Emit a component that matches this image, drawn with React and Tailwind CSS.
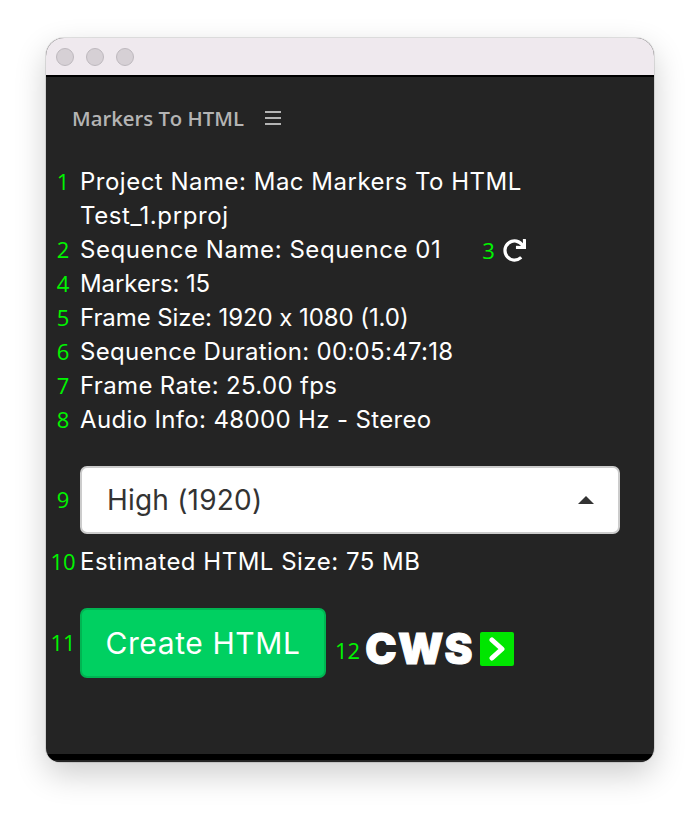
import React from "react";
import { FaRedo } from "react-icons/fa";

function Num({ children, className = "" }) {
  return (
    <div className={`w-[34px] shrink-0 text-center text-[22px] leading-[34px] text-[#00f500] font-['Open_Sans',sans-serif] ${className}`}>{children}</div>
  );
}

function Row({ n, children, track }) {
  return (
    <div className="flex">
      <Num className="-mt-px">{n}</Num>
      <div className={`flex-1 text-[24px] leading-[34px] text-white font-['Inter',sans-serif] ${track}`}>{children}</div>
    </div>
  );
}

export default function App() {
  return (
    <div className="h-[816px] w-[700px] bg-white pt-[38px] pl-[46px] overflow-hidden">
      <div className="w-[608px] h-[724px] rounded-t-[18px] rounded-b-[14px] overflow-hidden shadow-[0_0_0_1px_rgba(0,0,0,0.1),0_12px_32px_rgba(0,0,0,0.2)] flex flex-col bg-[#242424]">
        <div className="h-[39px] shrink-0 bg-[#efe9ee] border-b-2 border-black flex items-center gap-3 pl-[10px]">
          <div className="w-[18px] h-[18px] rounded-full bg-[#d6d0d5] border border-[#bdb8bd]" />
          <div className="w-[18px] h-[18px] rounded-full bg-[#d6d0d5] border border-[#bdb8bd]" />
          <div className="w-[18px] h-[18px] rounded-full bg-[#d6d0d5] border border-[#bdb8bd]" />
        </div>
        <div className="flex-1 flex flex-col">
          <div className="flex items-center h-[28px] mt-[27px] pl-[26px]">
            <span className="text-[20.3px] font-semibold text-[#b4b4b4] font-['Open_Sans',sans-serif] leading-[28px]">Markers To HTML</span>
            <div className="ml-[21px] w-[16px] flex flex-col gap-[4px]">
              <div className="h-[2px] bg-[#b4b4b4]" />
              <div className="h-[2px] bg-[#b4b4b4]" />
              <div className="h-[2px] bg-[#b4b4b4]" />
            </div>
          </div>
          <div className="mt-[33px]">
            <Row n="1" track="tracking-[0.5px]">Project Name: Mac Markers To HTML<br /><span className="tracking-[0.6px]">Test_1.prproj</span></Row>
            <Row n="2" track="tracking-[0.55px]">
              <div className="flex items-center">
                <span>Sequence Name: Sequence 01</span>
                <span className="ml-[41px] -mt-px text-[22px] tracking-normal text-[#00f500] font-['Open_Sans',sans-serif]">3</span>
                <FaRedo className="ml-[8px] text-white" size={23} />
              </div>
            </Row>
            <Row n="4" track="tracking-[-0.07px]">Markers: 15</Row>
            <Row n="5" track="tracking-[-0.08px]">Frame Size: 1920 x 1080 (1.0)</Row>
            <Row n="6" track="tracking-[0.3px]">Sequence Duration: 00:05:47:18</Row>
            <Row n="7" track="tracking-[0.35px]">Frame Rate: 25.00 fps</Row>
            <Row n="8" track="tracking-[0.35px]">Audio Info: 48000 Hz - Stereo</Row>
          </div>
          <div className="flex items-center mt-[29px]">
            <Num className="-mt-[2px]">9</Num>
            <div className="w-[540px] h-[68px] bg-white border-2 border-[#cccccc] rounded-[7px] flex items-center justify-between pl-[25px] pr-[24px]">
              <span className="text-[28px] tracking-[0.2px] text-[#333333] font-['Inter',sans-serif]">High (1920)</span>
              <svg width="16" height="8" viewBox="0 0 16 8"><path d="M8 0L16 8H0Z" fill="#333333" /></svg>
            </div>
          </div>
          <div className="mt-[11px]">
            <Row n="10" track="tracking-[0.5px]">Estimated HTML Size: 75 MB</Row>
          </div>
          <div className="flex mt-[29px]">
            <Num className="mt-[17px]">11</Num>
            <div className="w-[246px] h-[70px] bg-[#00d061] border-2 border-[#00b552] rounded-[7px] flex items-center justify-center text-[30px] tracking-[0.6px] text-white font-['Inter',sans-serif]">Create HTML</div>
            <div className="ml-[9px] mt-[25px] text-[22px] leading-[34px] text-[#00f500] font-['Open_Sans',sans-serif]">12</div>
            <div className="ml-[5px] mt-[16px] h-[50px] flex items-center">
              <span className="text-[42px] leading-[50px] tracking-[1.5px] font-black text-white font-['Inter',sans-serif] [-webkit-text-stroke:1px_white]">CWS</span>
            </div>
            <div className="ml-[6px] mt-[24px] w-[34px] h-[34px] bg-[#00e600] rounded-[2px] flex items-center justify-center">
              <svg width="16" height="24" viewBox="0 0 16 24" fill="none"><path d="M3 3L13 12L3 21" stroke="white" strokeWidth="5" strokeLinecap="round" strokeLinejoin="round" /></svg>
            </div>
          </div>
        </div>
        <div className="h-[6px] shrink-0 bg-black" />
        <div className="h-[2px] shrink-0 bg-[#242424]" />
      </div>
    </div>
  );
}
